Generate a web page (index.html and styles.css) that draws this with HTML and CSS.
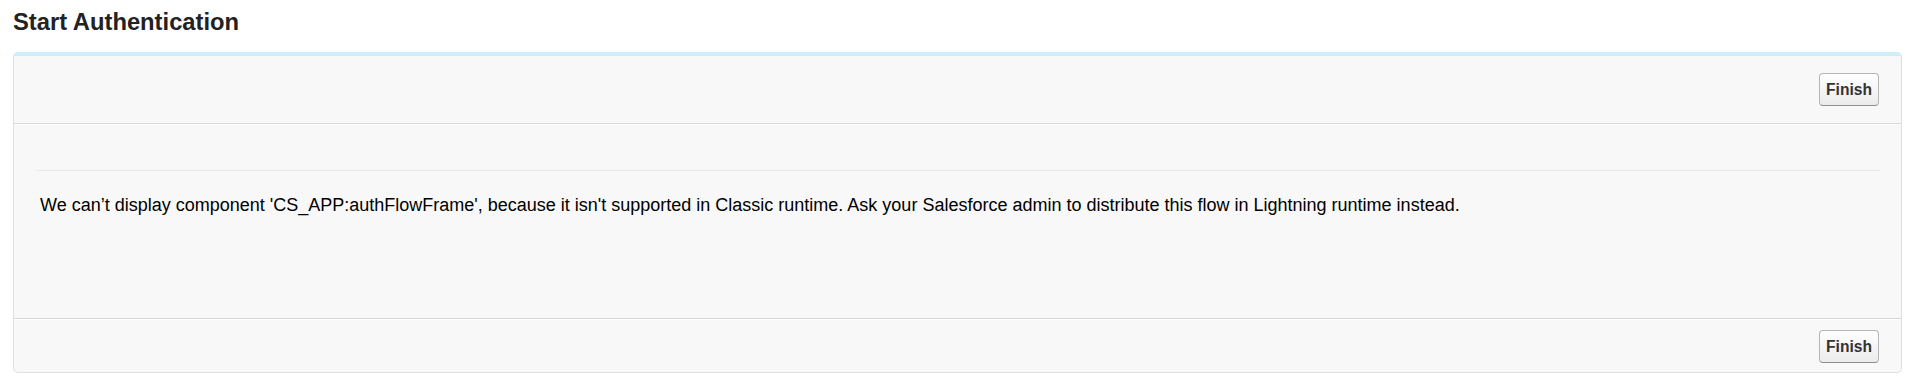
FILE: index.html
```html
<!DOCTYPE html>
<html lang="en">
<head>
  <meta charset="UTF-8">
  <title>Start Authentication</title>
  <link rel="stylesheet" href="styles.css">
</head>
<body>
  <h2 class="page-title">Start Authentication</h2>

  <div class="flow-card">
    <div class="flow-header">
      <button class="btn">Finish</button>
    </div>

    <div class="flow-body">
      <div class="flow-screen">
        <p class="flow-message">We can’t display component 'CS_APP:authFlowFrame', because it isn't supported in Classic runtime. Ask your Salesforce admin to distribute this flow in Lightning runtime instead.</p>
      </div>
    </div>

    <div class="flow-footer">
      <button class="btn">Finish</button>
    </div>
  </div>
</body>
</html>
```

FILE: styles.css
```css
body {
  font-family: Arial, "Liberation Sans", sans-serif;
  background-color: #ffffff;
  color: #000000;
  margin: 0;
  padding: 8px 16px 0 13px;
}

.page-title {
  font-size: 23.75px;
  font-weight: bold;
  color: #222222;
  margin: 0 0 16px;
}

.flow-card {
  background-color: #f8f8f8;
  border: 1px solid #e0e0e0;
  border-top: 4px solid #cfeef8;
  border-radius: 5px;
}

.flow-header {
  display: flex;
  justify-content: flex-end;
  padding: 17px 22px 17px;
  border-bottom: 1px solid #d8d8d8;
}

.flow-body {
  box-sizing: border-box;
  height: 195px;
  padding: 46px 21px 0 22px;
  border-bottom: 1px solid #d8d8d8;
  box-shadow: inset 0 1px 0 #ffffff;
}

.flow-screen {
  border-top: 1px solid #e8e8e8;
}

.flow-message {
  font-size: 18px;
  margin: 24px 0 0 4px;
}

.flow-footer {
  display: flex;
  justify-content: flex-end;
  padding: 11px 22px 9px;
  box-shadow: inset 0 1px 0 #ffffff;
}

.btn {
  font-family: Arial, "Liberation Sans", sans-serif;
  font-size: 15.6px;
  font-weight: bold;
  color: #333333;
  height: 33px;
  padding: 0 6px;
  margin: 0;
  border: 1px solid #b5b5b5;
  border-bottom-color: #8f8f8f;
  border-radius: 4px;
  background: linear-gradient(#ffffff, #ebebeb);
  cursor: pointer;
}
```
